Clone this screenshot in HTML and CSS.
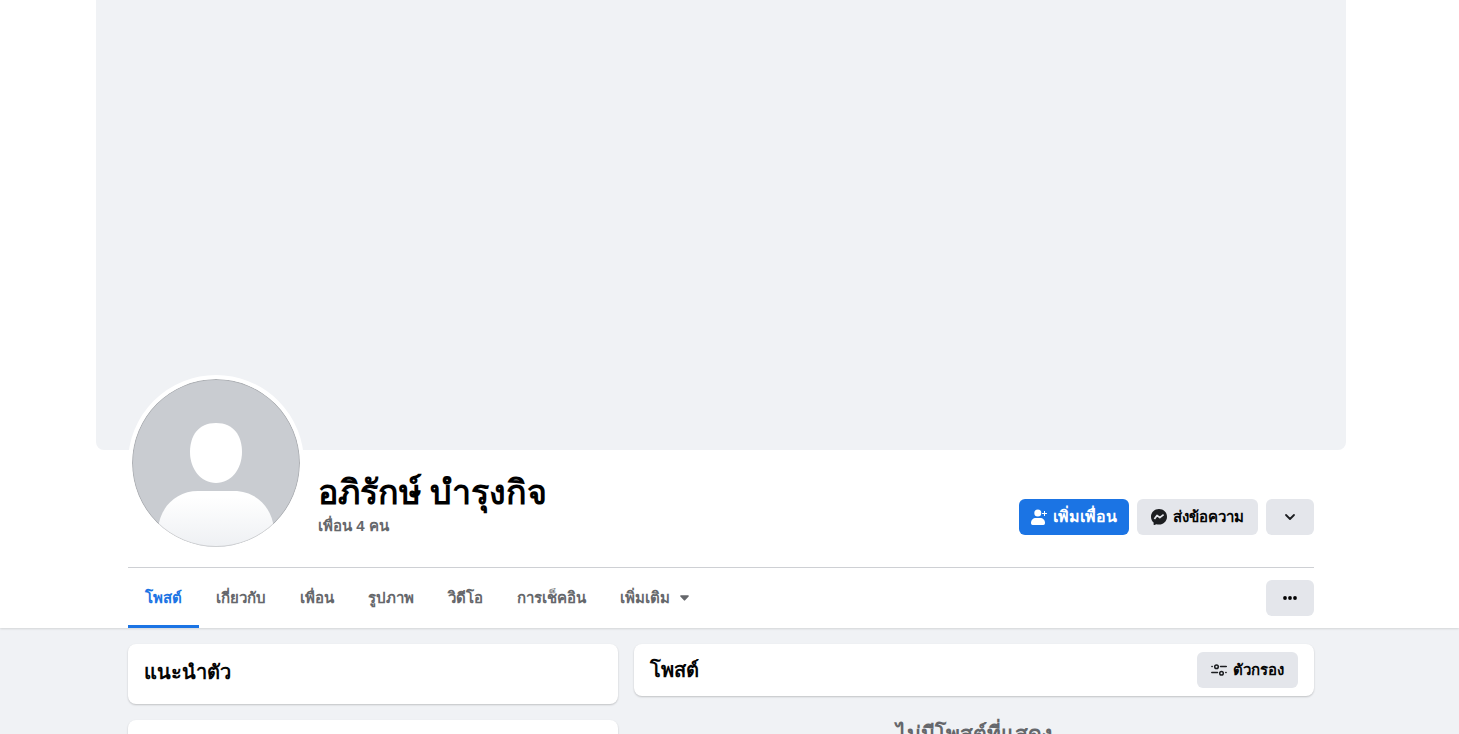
FILE: index.html
```html
<!DOCTYPE html>
<html lang="th">
<head>
<meta charset="utf-8">
<meta name="viewport" content="width=device-width, initial-scale=1">
<title>อภิรักษ์ บำรุงกิจ</title>
<link rel="stylesheet" href="styles.css">
</head>
<body>
<header class="header">
  <div class="cover"></div>
  <div class="container">
    <div class="profile">
      <svg class="avatar" viewBox="0 0 168 168" role="img" aria-label="รูปโปรไฟล์">
        <defs>
          <linearGradient id="body-fill" x1="0" y1="0" x2="0" y2="1">
            <stop offset="0.1" stop-color="#fff"/>
            <stop offset="0.95" stop-color="#eff1f4"/>
          </linearGradient>
          <clipPath id="round"><circle cx="84" cy="84" r="84"/></clipPath>
        </defs>
        <g clip-path="url(#round)">
          <path fill="#c9ccd1" d="M0 0h168v168H0z"/>
          <path fill="#fff" d="M84 44c18 0 26 13 26 29 0 17-11 31-26 31S58 90 58 73c0-16 8-29 26-29z"/>
          <path fill="url(#body-fill)" d="M26 150c2-22 18-38 40-38h36c22 0 38 16 40 38v18H26z"/>
        </g>
        <circle cx="84" cy="84" r="83.5" fill="none" stroke="#000" stroke-opacity=".14"/>
      </svg>
      <div class="identity">
        <h1 class="name">อภิรักษ์ บำรุงกิจ</h1>
        <a class="friends" href="#friends">เพื่อน 4 คน</a>
      </div>
      <div class="actions">
        <button class="button button-primary" type="button">
          <svg class="icon" viewBox="0 0 16 16" aria-hidden="true"><g fill="currentColor"><circle cx="6.800" cy="4" r="3.500"/><path d="M0 14C0 11 2 9 5 9h4c3 0 5 2 5 5 0 1.200-.6 2-1.600 2H1.600C.6 16 0 15.200 0 14z"/><path d="M13 2h1v2h2v1h-2v2h-1V5h-2V4h2z"/></g></svg>
          <span>เพิ่มเพื่อน</span>
        </button>
        <button class="button" type="button">
          <svg class="icon icon-dark" viewBox="0 0 16 16" aria-hidden="true"><path fill="currentColor" d="M8 0C3.500 0 0 3.300 0 7.700c0 2.400 1 4.400 2.600 5.800v1.900c0 .5.500.8.900.6l1.800-.8c.9.2 1.700.3 2.700.3 4.500 0 8-3.300 8-7.800S12.500 0 8 0z"/><path d="M3.400 10 6 6.400l2.800 2.300 3.800-3" fill="none" stroke="#e4e6eb" stroke-width="1.700" stroke-linejoin="round"/></svg>
          <span>ส่งข้อความ</span>
        </button>
        <button class="button button-icon" type="button" aria-label="ดูเพิ่มเติม">
          <svg class="icon icon-dark" viewBox="0 0 16 16" aria-hidden="true"><path d="m4 6 4 4 4-4" fill="none" stroke="currentColor" stroke-width="1.800" stroke-linecap="round" stroke-linejoin="round"/></svg>
        </button>
      </div>
    </div>
    <div class="bar">
      <nav class="tabs">
        <a class="tab tab-active" href="#posts">โพสต์</a>
        <a class="tab" href="#about">เกี่ยวกับ</a>
        <a class="tab" href="#friends">เพื่อน</a>
        <a class="tab" href="#photos">รูปภาพ</a>
        <a class="tab" href="#videos">วิดีโอ</a>
        <a class="tab" href="#checkins">การเช็คอิน</a>
        <a class="tab" href="#more">เพิ่มเติม
          <svg class="caret" viewBox="0 0 10 6" aria-hidden="true"><path fill="currentColor" d="M1 0h8c.8 0 1.100.9.600 1.400L5.700 5.600a1 1 0 0 1-1.400 0L.4 1.400C-.1.9.2 0 1 0z"/></svg>
        </a>
      </nav>
      <button class="button button-icon" type="button" aria-label="ตัวเลือก">
        <svg class="icon" viewBox="0 0 16 16" aria-hidden="true"><g fill="currentColor"><circle cx="3" cy="8" r="1.900"/><circle cx="8" cy="8" r="1.900"/><circle cx="13" cy="8" r="1.900"/></g></svg>
      </button>
    </div>
  </div>
</header>
<main class="content">
  <div class="side">
    <section class="card intro"><h2 class="title">แนะนำตัว</h2></section>
    <section class="card blank"></section>
  </div>
  <div class="feed" id="posts">
    <section class="card feed-head">
      <h2 class="title">โพสต์</h2>
      <button class="button" type="button">
        <svg class="icon icon-dark" viewBox="0 0 16 16" aria-hidden="true"><g fill="none" stroke="currentColor" stroke-width="1.500"><circle cx="5.500" cy="4.800" r="1.800"/><circle cx="10.500" cy="11.200" r="1.800"/><path stroke-linecap="round" d="M9.500 4.500h5.800M.8 10.500h5.700M.9 4.500h.3M14.800 10.500h.3"/></g></svg>
        <span>ตัวกรอง</span>
      </button>
    </section>
    <p class="empty">ไม่มีโพสต์ที่แสดง</p>
  </div>
</main>
</body>
</html>
```
FILE: styles.css
```css
* { box-sizing: border-box; }
html { height: 100%; overflow: hidden; }
body {
  margin: 0;
  height: 100%;
  overflow: hidden;
  background: #f0f2f5;
  color: #050505;
  font-family: "Liberation Sans", Arial, sans-serif;
  font-size: 15px;
  line-height: 20px;
}
h1, h2, p { margin: 0; }
a { color: inherit; text-decoration: none; }

.header {
  padding-right: 17px;
  background: #fff;
  box-shadow: 0 1px 2px rgba(0, 0, 0, .12);
}
.cover {
  max-width: 1250px;
  height: 450px;
  margin: 0 auto;
  border-radius: 0 0 8px 8px;
  background: #f0f2f5;
}
.container { max-width: 1186px; margin: 0 auto; }
.profile {
  display: flex;
  align-items: flex-end;
  padding-bottom: 16px;
  border-bottom: 1px solid #ced0d4;
}
.avatar {
  flex: none;
  width: 176px;
  height: 176px;
  margin-top: -75px;
  border: 4px solid #fff;
  border-radius: 50%;
  background: #fff;
}
.identity { flex: 1; padding: 0 0 15px 14px; }
.name { padding-bottom: 4px; font-size: 34px; line-height: 40px; color: #000; }
.friends { display: block; font-weight: 600; color: #65676b; }
.actions { display: flex; gap: 8px; padding-bottom: 16px; }

.button {
  display: inline-flex;
  align-items: center;
  justify-content: center;
  gap: 6px;
  height: 36px;
  padding: 0 14px;
  border: 0;
  border-radius: 6px;
  background: #e4e6eb;
  color: #050505;
  font: inherit;
  font-weight: 600;
  white-space: nowrap;
}
.button-primary { padding: 0 12px; background: #1b74e4; color: #fff; font-size: 16px; }
.button-icon { width: 48px; }
.icon { flex: none; width: 16px; height: 16px; }
.icon-dark { color: #1c1e21; }

.bar {
  display: flex;
  align-items: center;
  justify-content: space-between;
  height: 60px;
}
.tabs { display: flex; height: 60px; color: #65676b; font-weight: 600; }
.tab {
  display: flex;
  align-items: center;
  gap: 10px;
  padding: 3px 17px 0;
  border-bottom: 3px solid transparent;
  white-space: nowrap;
}
.tab-active { color: #1b74e4; border-color: #1b74e4; }
.caret { width: 9px; height: 6px; }

.content {
  display: grid;
  grid-template-columns: 490fr 680fr;
  align-items: start;
  gap: 16px;
  width: calc(100% - 17px);
  max-width: 1186px;
  margin: 16px 0 0 max(0px, calc((100% - 17px - 1186px) / 2));
}
.side, .feed { display: grid; gap: 16px; }
.card { border-radius: 8px; background: #fff; box-shadow: 0 1px 2px rgba(0, 0, 0, .2); }
.title { font-size: 20px; line-height: 24px; font-weight: 600; }
.intro { padding: 16px 16px 20px; }
.blank { height: 200px; }
.feed-head {
  display: flex;
  align-items: center;
  justify-content: space-between;
  padding: 8px 16px;
}
.empty {
  padding-top: 10px;
  color: #65676b;
  font-size: 21px;
  line-height: 24px;
  font-weight: 700;
  text-align: center;
}
```
